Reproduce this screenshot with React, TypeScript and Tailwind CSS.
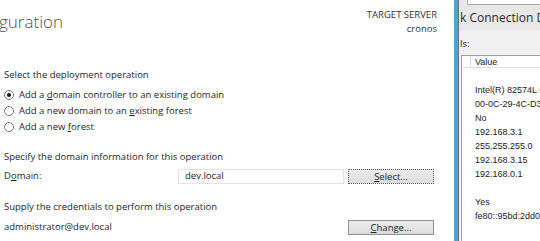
import React from "react";

const ui = { fontFamily: '"Open Sans", "Noto Sans", Arial, sans-serif' };
const tahoma = { fontFamily: '"Liberation Sans", Arial, sans-serif' };

function Radio({ checked, children }: { checked?: boolean; children: React.ReactNode }) {
  return (
    <div className="flex items-center h-[16px] pl-[4px]">
      <span className="w-[10px] h-[10px] rounded-full border border-[#777] bg-white flex items-center justify-center">
        {checked && <span className="w-[4px] h-[4px] rounded-full bg-[#1a1a1a]" />}
      </span>
      <span className="ml-[5px]">{children}</span>
    </div>
  );
}

const rows = [
  "",
  "Intel(R) 82574L Gigabit",
  "00-0C-29-4C-D3-8E",
  "No",
  "192.168.3.1",
  "255.255.255.0",
  "192.168.3.15",
  "192.168.0.1",
  "",
  "Yes",
  "fe80::95bd:2dd0:1234",
];

export default function App() {
  return (
    <div className="w-[540px] h-[241px] flex overflow-hidden bg-white text-[#1e1e1e]" style={ui}>
      {/* Left wizard panel */}
      <div className="w-[454px] h-full bg-white flex flex-col text-[9.5px]">
        <div className="h-[67px] flex justify-between">
          <div className="pt-[8px] text-[17px] font-light leading-[28px] text-[#505050] -ml-[1px] whitespace-nowrap">
            guration
          </div>
          <div className="pt-[8px] pr-[17px] text-right text-[#333] leading-[14px]">
            <div>TARGET SERVER</div>
            <div>cronos</div>
          </div>
        </div>
        <div className="h-[16px] leading-[16px] pl-[4px]">Select the deployment operation</div>
        <div className="mt-[4px]">
          <Radio checked>
            Add a <u>d</u>omain controller to an existing domain
          </Radio>
          <Radio>
            Add a new domain to an <u>e</u>xisting forest
          </Radio>
          <Radio>
            Add a new <u>f</u>orest
          </Radio>
        </div>
        <div className="mt-[14px] h-[16px] leading-[16px] pl-[4px]">Specify the domain information for this operation</div>
        <div className="mt-[4px] h-[15px] flex items-center pl-[4px]">
          <div className="w-[174px]">
            D<u>o</u>main:
          </div>
          <div className="w-[166px] h-[15px] border border-[#e3e3e3] bg-white flex items-center pl-[6px]">dev.local</div>
          <div className="ml-[4px] w-[86px] h-[15px] border border-dotted border-[#555] bg-gradient-to-b from-[#ececec] to-[#dddddd] flex items-center justify-center leading-none">
            <span>
              <u>S</u>elect...
            </span>
          </div>
        </div>
        <div className="mt-[15px] h-[16px] leading-[16px] pl-[4px]">Supply the credentials to perform this operation</div>
        <div className="mt-[5px] h-[15px] flex items-center pl-[4px]">
          <div className="w-[344px]">administrator@dev.local</div>
          <div className="w-[86px] h-[15px] border border-[#8f8f8f] bg-gradient-to-b from-[#ececec] to-[#dcdcdc] flex items-center justify-center leading-none">
            <span>
              <u>C</u>hange...
            </span>
          </div>
        </div>
      </div>

      {/* Blue window border */}
      <div className="w-[4px] h-full bg-[#4aa5d6]" />

      {/* Right dialog */}
      <div className="flex-1 h-full flex flex-col bg-[#f0f0f0] overflow-hidden border-l border-[#707070]">
        <div className="h-[5px] flex bg-[#e9e9e9]">
          <div className="w-[8px] h-full" />
          <div className="flex-1 h-full bg-white border-l border-b border-[#a8a8a8]" />
        </div>
        <div className="h-[25px] bg-[#e8e8e8] flex items-center whitespace-nowrap text-[12px] text-[#2a2a2a] pl-[1px]">
          k Connection Details
        </div>
        <div className="h-[25px] flex items-center whitespace-nowrap text-[9.5px] pl-[1px] pt-[3px]">ls:</div>
        <div className="flex-1 ml-[2px] bg-white border-l border-t border-[#a0a0a0] flex flex-col" style={tahoma}>
          <div className="h-[12px] flex border-b border-[#e0e0e0] text-[9px] leading-[12px] text-[#222]">
            <div className="w-[9px] border-r border-[#d8d8d8]" />
            <div className="pl-[4px]">Value</div>
          </div>
          <div className="pt-[1px] text-[9px] text-[#1a1a1a]">
            {rows.map((r, i) => (
              <div key={i} className="h-[14px] leading-[14px] pl-[13px] whitespace-nowrap">
                {r}
              </div>
            ))}
          </div>
        </div>
      </div>
    </div>
  );
}
